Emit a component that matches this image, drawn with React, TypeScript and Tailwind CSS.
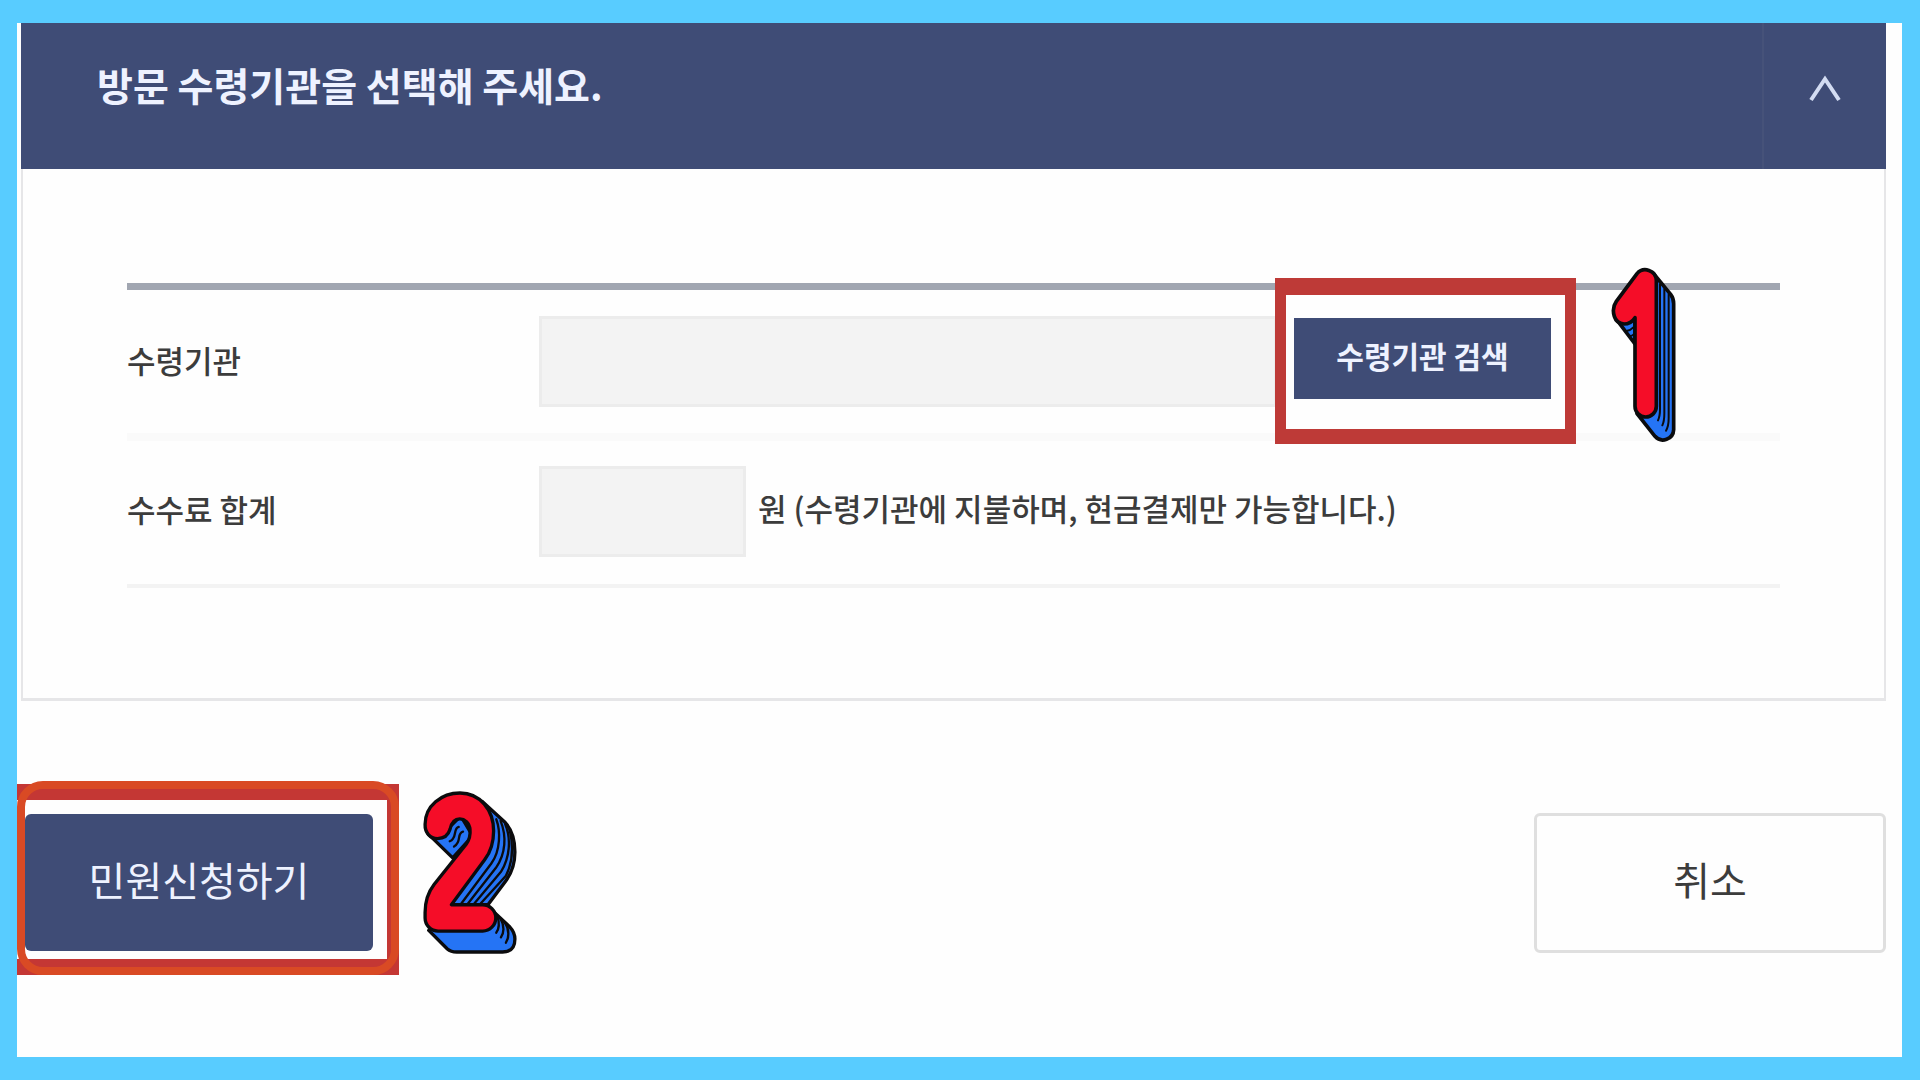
import { useState } from 'react'

function NumberOne({ className }: { className: string }) {
  return (
    <svg
      className={className}
      viewBox="64 52 198 528"
      fill="none"
      stroke="#0b0b0d"
      strokeWidth={11}
      strokeLinejoin="round"
      strokeLinecap="round"
      aria-hidden="true"
    >
      <path
        fill="#2574f5"
        d="M190 70 L243 134 Q252 146 252 162 V540 A32 32 0 0 1 196 560 L142 492 Z"
      />
      <path fill="#2574f5" d="M78 206 L136 283 V200 Z" />
      <g strokeWidth={6}>
        <path d="M211 104 V478 Q211 500 205 512" />
        <path d="M224 118 V492 Q224 514 218 527" />
        <path d="M237 134 V506 Q237 530 229 543" />
        <path d="M110 244 Q122 243 130 234" />
        <path d="M122 259 Q128 258 132 254" />
      </g>
      <path
        fill="#f50d28"
        d="M200 92 A33 33 0 0 0 142 72 L80 155 Q66 175 74 200 A33 33 0 0 0 103 223 Q124 223 136 204 V470 A32 32 0 0 0 200 470 Z"
      />
    </svg>
  )
}

function NumberTwo({ className }: { className: string }) {
  return (
    <svg
      className={className}
      viewBox="67 65 282 490"
      fill="none"
      stroke="#0b0b0d"
      strokeWidth={10}
      strokeLinejoin="round"
      strokeLinecap="round"
      aria-hidden="true"
    >
      <path
        fill="#2574f5"
        d="M244 96 L314 160 C334 182 343 212 343 248 C343 284 333 312 315 336 L262 407 H152 Z"
      />
      <path
        fill="#2574f5"
        d="M262 412 L328 474 Q343 490 343 510 Q343 549 306 549 H168 Q150 549 140 540 L84 484 Z"
      />
      <path fill="#2574f5" d="M82 194 L156 266 L216 200 L180 140 L130 190 Z" />
      <g strokeWidth={7}>
        <path d="M287 150 C300 185 300 245 272 283 L182 403" />
        <path d="M300 155 C318 200 316 253 286 296 L202 403" />
        <path d="M314 165 C332 208 328 265 301 308 L221 403" />
        <path d="M328 185 C338 230 336 280 316 320 L240 403" />
        <path d="M290 440 C296 458 296 478 287 491" />
        <path d="M301 452 C312 470 310 492 301 505" />
        <path d="M314 462 C327 482 325 508 316 521" />
        <path d="M174 173 C160 176 166 198 157 208 Q153 214 147 216" />
        <path d="M187 187 C172 190 178 208 171 220 Q167 228 160 232" />
      </g>
      <path
        fill="#f50d28"
        d="M73 165 C73 110 122 71 178 71 C238 71 279 122 279 185 C279 220 270 248 252 272 L152 407 H246 A39 39 0 0 1 246 486 H112 A39 39 0 0 1 73 447 V430 C73 390 83 368 100 346 L196 226 C207 211 210 198 208 180 C206 160 192 149 177 149 C160 149 152 162 148 180 C142 200 128 208 110 208 C88 208 72 190 73 165 Z"
      />
    </svg>
  )
}

export default function App() {
  const [agency, setAgency] = useState('')
  const [fee, setFee] = useState('')

  return (
    <div className="min-h-screen bg-[#58ccff] py-[23px] pl-[17px] pr-[18px] font-['Noto_Sans_CJK_KR','Noto_Sans',sans-serif] flex flex-col">
      <main className="flex-1 bg-[#fefefe]">
        <section className="ml-1 mr-4">
          <header className="flex h-[146px] bg-[#3f4c76] text-white">
            <h1 className="flex-1 self-center pb-6 pl-[76px] text-[39px] leading-none font-bold text-[#eef2ff]">
              방문 수령기관을 선택해 주세요.
            </h1>
            <button
              type="button"
              aria-label="접기"
              className="flex w-[124px] items-center justify-center border-l-2 border-[#465279] pb-4"
            >
              <svg
                className="h-7 w-8"
                viewBox="0 0 32 28"
                fill="none"
                stroke="#d3dcf2"
                strokeWidth={4}
                aria-hidden="true"
              >
                <path d="M2 26 L16 5 L30 26" />
              </svg>
            </button>
          </header>

          <div className="border-x-2 border-b-3 border-[#e6e6e8] pt-[114px] pr-[104px] pb-[110px] pl-[104px]">
            <table className="w-full border-separate border-spacing-0 border-t-[7px] border-[#a1a6b1] text-[31px] leading-none text-[#3c3c3c]">
              <tbody>
                <tr>
                  <th className="w-[412px] border-b-8 border-[#fafafa] pb-1 text-left font-medium">
                    <label htmlFor="agency">수령기관</label>
                  </th>
                  <td className="border-b-8 border-[#fafafa] py-[26px]">
                    <div className="flex items-start">
                      <input
                        id="agency"
                        type="text"
                        readOnly
                        value={agency}
                        onChange={(e) => setAgency(e.target.value)}
                        className="h-[91px] w-[738px] border-3 border-[#ececec] bg-[#f3f3f3] px-4"
                      />
                      <div className="relative mt-0.5 ml-[17px]">
                        <div className="absolute -top-10 -right-[25px] -bottom-[45px] -left-[19px] border-x-[11px] border-t-[17px] border-b-[15px] border-[#be3a37] bg-[#fefefe]" />
                        <button
                          type="button"
                          className="relative h-[81px] w-[257px] bg-[#3f4c76] pb-2 text-[30px] leading-none font-bold text-[#eef2ff]"
                        >
                          수령기관 검색
                        </button>
                        <NumberOne className="absolute -top-[51px] left-[317px] h-44 w-[66px]" />
                      </div>
                    </div>
                  </td>
                </tr>
                <tr>
                  <th className="border-b-4 border-[#f3f3f3] pb-2 text-left font-medium">
                    <label htmlFor="fee">수수료 합계</label>
                  </th>
                  <td className="border-b-4 border-[#f3f3f3] pt-[25px] pb-[27px]">
                    <div className="flex items-center gap-3">
                      <input
                        id="fee"
                        type="text"
                        readOnly
                        value={fee}
                        onChange={(e) => setFee(e.target.value)}
                        className="h-[91px] w-[207px] border-3 border-[#ececec] bg-[#f3f3f3] px-4"
                      />
                      <span className="pb-2 font-medium">
                        원 (수령기관에 지불하며, 현금결제만 가능합니다.)
                      </span>
                    </div>
                  </td>
                </tr>
              </tbody>
            </table>
          </div>
        </section>

        <div className="mt-20 flex items-start justify-between pr-4">
          <div className="flex items-start gap-6">
            <div className="relative h-[194px] w-[382px] pt-[33px] pl-2">
              <div className="absolute inset-x-0 top-[3px] bottom-0 border-y-[16px] border-r-[12px] border-[#c43734]" />
              <button
                type="button"
                className="relative h-[137px] w-[348px] rounded-md bg-[#3f4c76] pb-2 text-[40px] leading-none text-[#eef2ff]"
              >
                민원신청하기
              </button>
              <div className="pointer-events-none absolute inset-0 rounded-[26px] border-8 border-[#d94a24]" />
            </div>
            <NumberTwo className="mt-2.5 h-[163px] w-[94px]" />
          </div>
          <button
            type="button"
            className="mt-8 h-[140px] w-[352px] rounded-md border-3 border-[#dfdfdf] pb-2 text-[40px] leading-none text-[#3c3c3c]"
          >
            취소
          </button>
        </div>
      </main>
    </div>
  )
}
